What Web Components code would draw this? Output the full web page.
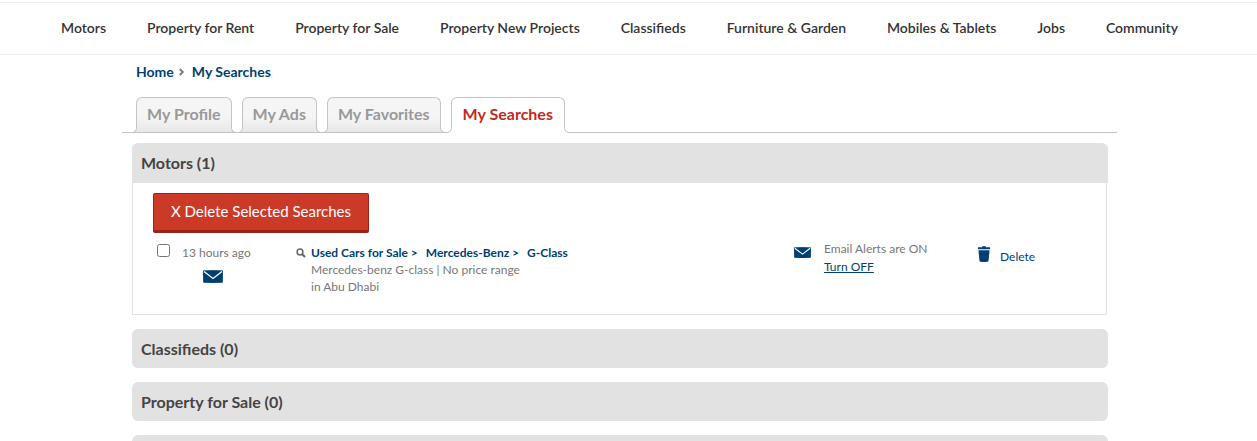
<!DOCTYPE html>
<html lang="en">
<head>
<meta charset="utf-8">
<title>My Searches</title>
<style>
  body { margin: 0; background: #fff; color: #777; font: 12px/17px "Lato", sans-serif; overflow-x: hidden; }
</style>
</head>
<body>
<my-searches-page></my-searches-page>

<template id="t-page">
  <style>
    :host { display: block; padding-top: 2px; }
    main { box-sizing: border-box; max-width: 995px; margin: 0 auto; }
    .scroll { padding-right: 18px; }
    .crumbs { padding: 0 14px; }
    .sections { display: grid; gap: 14px; padding: 10px 9px 0 10px; }
  </style>
  <site-nav></site-nav>
  <div class="scroll">
    <main>
      <bread-crumbs class="crumbs"></bread-crumbs>
      <tab-bar>
        <tab-item>My Profile</tab-item>
        <tab-item>My Ads</tab-item>
        <tab-item>My Favorites</tab-item>
        <tab-item active>My Searches</tab-item>
      </tab-bar>
      <div class="sections">
        <search-section heading="Motors (1)" open>
          <saved-search></saved-search>
        </search-section>
        <search-section heading="Classifieds (0)"></search-section>
        <search-section heading="Property for Sale (0)"></search-section>
        <search-section heading=""></search-section>
      </div>
    </main>
  </div>
</template>

<template id="t-nav">
  <style>
    :host { display: block; border: solid #ebebeb; border-width: 1px 0; padding-right: 18px; }
    nav { display: flex; justify-content: space-between; max-width: 1117px; margin: 0 auto; height: 49px; padding-bottom: 2px; align-items: center; }
    a { color: #333; font-size: 14px; line-height: 20px; font-weight: 600; text-decoration: none; white-space: nowrap; }
  </style>
  <nav aria-label="Categories">
    <a href="#">Motors</a><a href="#">Property for Rent</a><a href="#">Property for Sale</a><a href="#">Property New Projects</a><a href="#">Classifieds</a><a href="#">Furniture &amp; Garden</a><a href="#">Mobiles &amp; Tablets</a><a href="#">Jobs</a><a href="#">Community</a>
  </nav>
</template>

<template id="t-crumbs">
  <style>
    :host { display: block; }
    nav { display: flex; align-items: center; gap: 5px; height: 34px; }
    a { color: #003f72; font-size: 14px; line-height: 20px; font-weight: 700; text-decoration: none; }
    svg { margin-right: 3px; }
  </style>
  <nav aria-label="Breadcrumb">
    <a href="#">Home</a>
    <svg width="5" height="8" viewBox="0 0 5 8" fill="none" stroke="#808080" stroke-width="2" aria-hidden="true"><path d="M.7 1 3.8 4 .7 7"/></svg>
    <a href="#">My Searches</a>
  </nav>
</template>

<template id="t-tabs">
  <style>
    :host { display: block; padding-top: 8px; }
    nav { display: flex; gap: 10px; padding: 0 14px; border-bottom: 1px solid #c4c4c4; }
  </style>
  <nav aria-label="Account"><slot></slot></nav>
</template>

<template id="t-tab">
  <style>
    :host { display: block; position: relative; --fill: linear-gradient(#f5f5f5 55%, #e8e8e8); --foot: #e9e9e9; --gap: none; }
    a { display: block; box-sizing: border-box; height: 35px; padding: 6px 10px 0; border: 1px solid #c4c4c4; border-bottom: 0; border-radius: 6px 6px 0 0; background: var(--fill); color: #999; font-size: 16px; line-height: 20px; font-weight: 700; text-decoration: none; white-space: nowrap; }
    svg { position: absolute; bottom: -1px; left: -4px; }
    svg:last-child { left: auto; right: -4px; transform: scaleX(-1); }
    .foot { fill: var(--foot); }
    .gap { fill: var(--gap); }
    :host([active]) { --fill: #fff; --foot: #fff; --gap: #fff; margin-bottom: -1px; }
    :host([active]) a { color: #c02a20; height: 36px; padding: 6px 11px 0; }
    :host([active]) svg { bottom: 0; }
  </style>
  <a href="#"><slot></slot></a>
  <svg width="6" height="6" viewBox="0 0 6 6" aria-hidden="true"><path class="gap" d="M1 5h5v1H1z"/><path class="foot" d="M4 0h2v5H2q2-1 2-5z"/><path d="M4.500 0v1.500Q4.500 5 .5 5.500" fill="none" stroke="#c4c4c4"/></svg>
  <svg width="6" height="6" viewBox="0 0 6 6" aria-hidden="true"><path class="gap" d="M1 5h5v1H1z"/><path class="foot" d="M4 0h2v5H2q2-1 2-5z"/><path d="M4.500 0v1.500Q4.500 5 .5 5.500" fill="none" stroke="#c4c4c4"/></svg>
</template>

<template id="t-section">
  <style>
    :host { display: block; }
    h2 { margin: 0; padding: 0 9px; height: 39px; border-radius: 6px; background: #e2e2e2; color: #444; font-size: 16px; line-height: 40px; font-weight: 700; }
    :host([open]) h2 { height: 40px; border-radius: 6px 6px 0 0; }
    .body { display: none; margin-right: 1px; padding: 10px 0 18px 20px; border: 1px solid #e0e0e0; border-top: 0; }
    :host([open]) .body { display: block; }
    button { display: block; height: 40px; min-width: 216px; padding: 0 15px 2px; border: 1px solid #9a2318; border-bottom-width: 3px; border-radius: 2px; background: #cb3927; color: #fff; font: 400 15px/20px "Lato", sans-serif; }
  </style>
  <section>
    <h2></h2>
    <div class="body">
      <button type="button">X Delete Selected Searches</button>
      <slot></slot>
    </div>
  </section>
</template>

<template id="t-mail">
  <style>
    :host { display: block; width: 20px; }
    svg { display: block; width: 100%; }
  </style>
  <svg viewBox="0 0 20 13" aria-hidden="true"><path fill="#003f72" d="M.4.5h19.2v12H.4z"/><path fill="#003f72" d="M0 .8Q10-.4 20 .8l-.5 11.7Q10 13.4.5 12.5z"/><path d="m1 1.400 9 7 9-7" fill="none" stroke="#fff" stroke-width="1.300"/></svg>
</template>

<template id="t-search">
  <style>
    :host { display: block; }
    article { display: grid; box-sizing: border-box; grid-template-columns: 139px 1fr 184px 128px; padding: 8px 0 0 4px; min-height: 63px; }
    a { color: #003f72; }
    .pick { display: grid; grid-template-columns: 25px 1fr; align-items: start; align-content: start; padding-top: 3px; }
    input { width: 13px; height: 13px; margin: 0; }
    .pick mail-icon { grid-column: 2; margin: 8px 0 0 21px; }
    .what { display: flex; gap: 5px; padding-top: 3px; }
    .what svg { margin-top: 4px; flex: none; }
    .what a { font-weight: 700; text-decoration: none; margin-right: 8px; }
    p { margin: 0; }
    .alerts { display: flex; gap: 13px; line-height: 18px; }
    .alerts mail-icon { width: 17px; margin-top: 6px; }
    .alerts div, .del span { margin-top: -1px; }
    .del { display: flex; gap: 10px; text-decoration: none; padding-top: 5px; }
    .del span { padding-top: 3px; }
    .pick label { line-height: 18px; }
  </style>
  <article>
    <div class="pick">
      <input type="checkbox" id="pick"><label for="pick">13 hours ago</label>
      <mail-icon></mail-icon>
    </div>
    <div class="what">
      <svg width="10" height="10" viewBox="0 0 10 10" fill="none" stroke="#666" aria-hidden="true"><circle cx="4" cy="4" r="2.900" stroke-width="1.500"/><path d="m6 6 3 3" stroke-width="2"/></svg>
      <div>
        <p><a href="#">Used Cars for Sale &gt;</a><a href="#">Mercedes-Benz &gt;</a><a href="#">G-Class</a></p>
        <p>Mercedes-benz G-class | No price range</p>
        <p>in Abu Dhabi</p>
      </div>
    </div>
    <div class="alerts">
      <mail-icon></mail-icon>
      <div><p>Email Alerts are ON</p><a href="#">Turn OFF</a></div>
    </div>
    <a class="del" href="#">
      <svg width="12" height="16" viewBox="0 0 12 16" fill="#003f72" aria-hidden="true"><path d="M0 1.2h4Q4.500 0 6 0t2 1.200h4v2H0zM.5 4.200h11l-.9 10q-.1 1.500-1.400 1.600-3.200.4-6.400 0-1.300-.1-1.400-1.600z"/></svg>
      <span>Delete</span>
    </a>
  </article>
</template>

<script>
  const define = (name, id, setup) => customElements.define(name, class extends HTMLElement {
    constructor() {
      super();
      this.attachShadow({ mode: "open" }).append(document.getElementById(id).content.cloneNode(true));
    }
    connectedCallback() { if (setup) setup(this); }
  });
  define("mail-icon", "t-mail");
  define("site-nav", "t-nav");
  define("bread-crumbs", "t-crumbs");
  define("tab-item", "t-tab");
  define("tab-bar", "t-tabs");
  define("saved-search", "t-search");
  define("search-section", "t-section", el => {
    el.shadowRoot.querySelector("h2").textContent = el.getAttribute("heading");
  });
  define("my-searches-page", "t-page");
</script>
</body>
</html>
